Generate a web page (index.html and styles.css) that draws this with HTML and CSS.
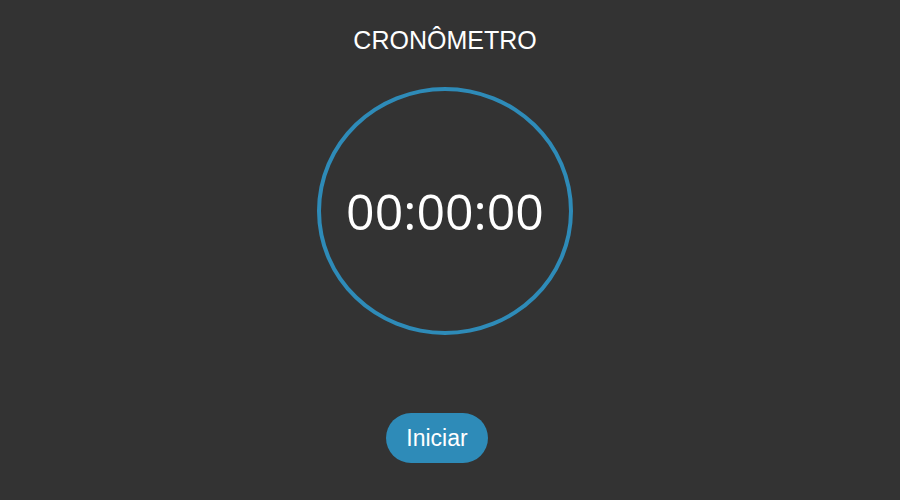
FILE: index.html
```html
<!DOCTYPE html>
<html lang="pt-BR">
<head>
<meta charset="utf-8">
<title>Cronômetro</title>
<link rel="stylesheet" href="styles.css">
</head>
<body>
<main class="app">
  <h1 class="title">CRONÔMETRO</h1>
  <div class="dial">
    <span class="time">00:00:00</span>
  </div>
  <button class="start">Iniciar</button>
</main>
</body>
</html>
```
FILE: styles.css
```css
html, body {
  margin: 0;
  height: 100%;
  background: #333333;
}
.app {
  display: flex;
  flex-direction: column;
  align-items: center;
  padding-top: 26px;
  padding-right: 10px;
  font-family: "Liberation Sans", Arial, sans-serif;
  color: #ffffff;
}
.title {
  margin: 0;
  font-size: 25px;
  line-height: 29px;
  font-weight: 400;
}
.dial {
  margin-top: 32px;
  box-sizing: border-box;
  width: 256px;
  height: 248px;
  border: 4px solid #2e8bb8;
  border-radius: 50%;
  display: flex;
  align-items: center;
  justify-content: center;
}
.time {
  font-family: "Open Sans", sans-serif;
  font-size: 50px;
  line-height: 1;
  color: #ffffff;
}
.start {
  margin-top: 78px;
  margin-right: 16px;
  height: 50px;
  padding: 0 20px;
  border: none;
  border-radius: 25px;
  background: #2e8bb8;
  color: #ffffff;
  font-family: "Liberation Sans", Arial, sans-serif;
  font-size: 23px;
  cursor: pointer;
}
```
